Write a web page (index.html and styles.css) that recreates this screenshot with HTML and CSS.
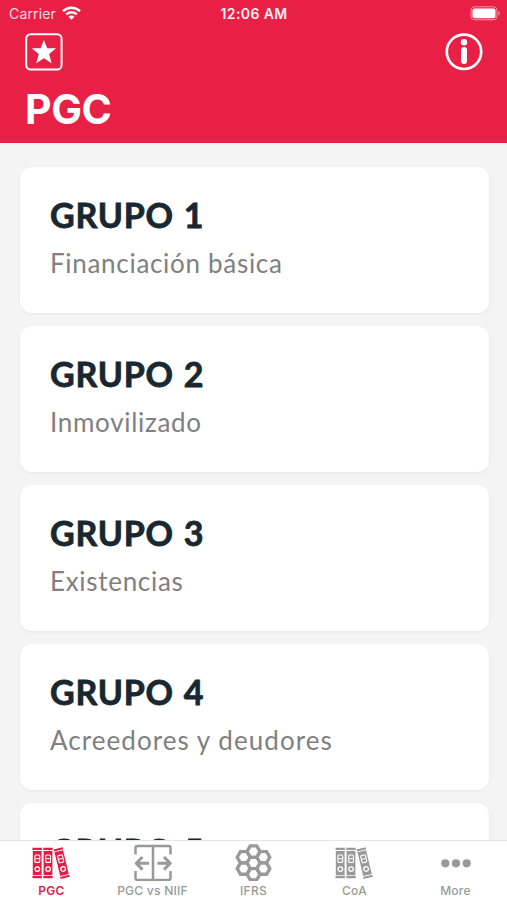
FILE: index.html
```html
<!DOCTYPE html>
<html lang="es">
<head>
<meta charset="utf-8">
<title>PGC</title>
<link rel="stylesheet" href="styles.css">
</head>
<body>
<svg class="defs" width="0" height="0" aria-hidden="true">
  <defs>
    <g id="binder">
      <path fill="currentColor" d="M0 0h9.4v2.2H0zM.3 3.1h8.8v24.3H.3zM0 28.3h9.4v2.2H0z"/>
      <rect x="2.4" y="7.2" width="4.8" height="7.4" rx="1" fill="none" stroke="#fff" stroke-width="1.1"/>
      <path d="M3 10.9h3.6" stroke="#fff"/>
      <circle cx="4.8" cy="21.3" r="2.3" fill="none" stroke="#fff" stroke-width="1.3"/>
    </g>
    <symbol id="binders" viewBox="0 0 40 38">
      <use href="#binder" x=".5" y="4.8"/>
      <use href="#binder" x="11.3" y="4.8"/>
      <use href="#binder" transform="translate(21.5 6.4) rotate(-13.5)"/>
    </symbol>
    <path id="hex" d="M6.5 0 3.25 5.63h-6.5L-6.5 0l3.25-5.63h6.5z"/>
  </defs>
</svg>
<div class="app">
  <header class="header">
    <div class="status">
      <div class="carrier"><span>Carrier</span>
        <svg width="19" height="14" viewBox="0 0 19 14"><g fill="none" stroke="#fff" stroke-width="2.5"><path d="M1 5.1a12.2 12.2 0 0 1 17 0"/><path d="M4.2 8.4a7.6 7.6 0 0 1 10.6 0"/></g><path fill="#fff" d="M6.5 10.7a4.2 4.2 0 0 1 6 0l-3 3z"/></svg>
      </div>
      <div class="time">12:06 AM</div>
      <svg class="battery" width="31" height="15" viewBox="0 0 31 15"><rect x="1" y=".8" width="26" height="13" rx="3.5" fill="none" stroke="#f596a8"/><rect x="2.5" y="2.4" width="23" height="9.8" rx="2" fill="#fff"/><path d="M28.5 5v4.5q1.5-.7 1.5-2.25T28.5 5z" fill="#f596a8"/></svg>
    </div>
    <div class="actions">
      <svg width="38" height="38" viewBox="0 0 38 38"><rect x="1.2" y="1.2" width="35.4" height="35.4" rx="4.5" fill="none" stroke="#fff" stroke-width="2"/><path fill="#fff" d="m18.9 7 3.3 8.3h8.9l-7 5.8 2.5 9.2-7.7-5-7.7 5 2.5-9.2-7-5.8h8.9z"/></svg>
      <svg width="38" height="38" viewBox="0 0 38 38"><circle cx="19" cy="18.8" r="17.2" fill="none" stroke="#fff" stroke-width="2.7"/><circle cx="19" cy="9.3" r="3.2" fill="#fff"/><rect x="16" y="14" width="6" height="17" rx="3" fill="#fff"/></svg>
    </div>
    <h1>PGC</h1>
  </header>
  <main class="list">
    <article class="card"><h2>GRUPO 1</h2><p>Financiación básica</p></article>
    <article class="card"><h2>GRUPO 2</h2><p>Inmovilizado</p></article>
    <article class="card"><h2>GRUPO 3</h2><p>Existencias</p></article>
    <article class="card"><h2>GRUPO 4</h2><p class="wide">Acreedores y deudores</p></article>
    <article class="card"><h2>GRUPO 5</h2></article>
  </main>
  <nav class="tabs">
    <div class="tab active"><svg width="40" height="38"><use href="#binders"/></svg><span>PGC</span></div>
    <div class="tab"><svg width="40" height="38" viewBox="0 0 40 38"><g fill="none" stroke="currentColor" stroke-width="2.5" stroke-linejoin="round"><path d="M2.5 11.5V5q0-2 2-2h31q2 0 2 2v6.5M2.5 28v7q0 2 2 2h31q2 0 2-2v-7M20 3v34"/><path stroke-width="2.9" d="M16 20.3H3.5M9.5 14l-6.300 6.300 6.300 6.300M24.5 20.3H37M31 14l6.300 6.300-6.300 6.300"/></g></svg><span>PGC vs NIIF</span></div>
    <div class="tab"><svg width="40" height="38" viewBox="0 0 40 38"><g fill="none" stroke="currentColor" stroke-width="3.3"><use href="#hex" x="19.5" y="8.6"/><use href="#hex" x="29.3" y="14.2"/><use href="#hex" x="29.3" y="25.6"/><use href="#hex" x="19.5" y="31.2"/><use href="#hex" x="9.7" y="25.6"/><use href="#hex" x="9.7" y="14.2"/></g></svg><span>IFRS</span></div>
    <div class="tab"><svg width="40" height="38"><use href="#binders"/></svg><span>CoA</span></div>
    <div class="tab"><svg width="40" height="38" viewBox="0 0 40 38"><g fill="currentColor"><circle cx="9.3" cy="20.3" r="4.1"/><circle cx="20" cy="20.3" r="4.1"/><circle cx="30.7" cy="20.3" r="4.1"/></g></svg><span>More</span></div>
  </nav>
</div>
</body>
</html>
```
FILE: styles.css
```css
* { box-sizing: border-box; }
body { margin: 0; font-family: Inter, "Liberation Sans", sans-serif; }
svg { display: block; flex: none; }
.defs { position: absolute; }
.app { width: 507px; height: 900px; display: flex; flex-direction: column; overflow: hidden; background: #f4f4f4; }
.header { flex: none; height: 142.5px; background: #e92045; color: #fff; }
.status { height: 33px; padding: 6px 6px 0 9px; display: grid; grid-template-columns: 1fr auto 1fr; font-size: 14px; line-height: 16px; }
.carrier { display: flex; gap: 6px; color: #ffdce3; letter-spacing: .15px; }
.time { font-weight: 600; letter-spacing: .4px; color: #fff0f3; margin-left: -2px; }
.battery { justify-self: end; }
.actions { display: flex; justify-content: space-between; padding: 0 24px 0 25px; }
h1 { margin: 14px 0 0 25px; font-size: 41px; line-height: 48px; font-weight: 700; letter-spacing: -.4px; }
.list { flex: 1; min-height: 0; overflow: hidden; padding: 24.5px 18.5px 0 19.5px; display: flex; flex-direction: column; gap: 13px; }
.card { flex: none; height: 146px; border-radius: 12px; background: #fff; padding: 25.5px 30.5px; box-shadow: 0 1px 3px rgba(0,0,0,.06); font-family: Lato, "Liberation Sans", sans-serif; }
h2 { margin: 0; font-size: 34px; line-height: 44px; font-weight: 700; color: #192730; letter-spacing: .7px; word-spacing: 1.2px; -webkit-text-stroke: .8px #192730; }
.card p { margin: 9.5px 0 0; font-size: 26px; line-height: 34px; color: #808080; letter-spacing: .7px; }
.card .wide { letter-spacing: 1.05px; }
.tabs { flex: none; height: 60px; border-top: 1.5px solid #e5e5e5; background: #fff; display: grid; grid-template-columns: repeat(5, 1fr); padding: 2px 1px 0; color: #999; }
.tab { display: flex; flex-direction: column; align-items: center; font-size: 12px; line-height: 16px; font-weight: 500; letter-spacing: .25px; white-space: nowrap; }
.tab span { margin-top: 2px; }
.active { color: #df1e47; }
.active span { font-weight: 600; }
```
